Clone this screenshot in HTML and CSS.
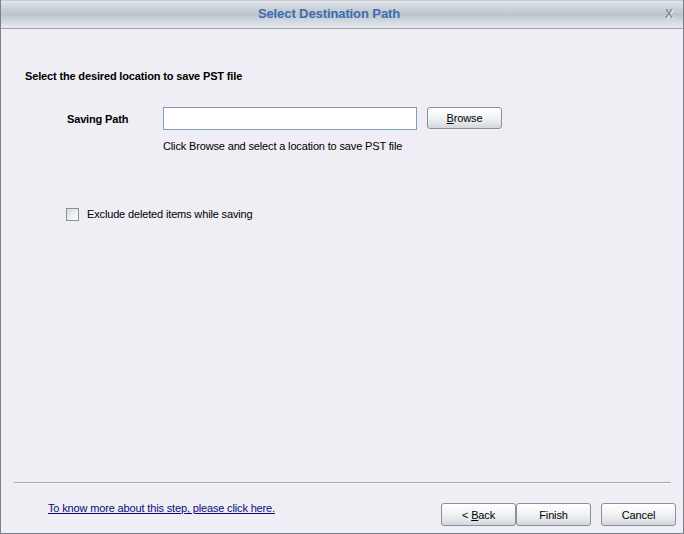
FILE: index.html
```html
<!DOCTYPE html>
<html>
<head>
<meta charset="utf-8">
<link rel="stylesheet" href="styles.css">
</head>
<body>
<div class="window">
  <div class="titlebar">
    <div class="title">Select Destination Path</div>
    <div class="close">X</div>
  </div>
  <div class="content">
    <div class="heading">Select the desired location to save PST file</div>
    <div class="path-row">
      <div class="label">Saving Path</div>
      <div class="path-col">
        <div class="path-inputs">
          <div class="input"></div>
          <div class="btn browse"><span><u>B</u>rowse</span></div>
        </div>
        <div class="hint">Click Browse and select a location to save PST file</div>
      </div>
    </div>
    <div class="check-row">
      <div class="checkbox"></div>
      <div class="check-label">Exclude deleted items while saving</div>
    </div>
  </div>
  <div class="footer">
    <div class="sep"></div>
    <div class="footer-row">
      <a class="link">To know more about this step, please click here.</a>
      <div class="buttons">
        <div class="btn"><span>&lt; <u>B</u>ack</span></div>
        <div class="btn">Finish</div>
        <div class="btn cancel">Cancel</div>
      </div>
    </div>
  </div>
</div>
</body>
</html>
```

FILE: styles.css
```css
* { box-sizing: border-box; }
html, body { margin: 0; padding: 0; }
body {
  width: 684px;
  height: 534px;
  font-family: "Liberation Sans", Arial, sans-serif;
  font-size: 11px;
  letter-spacing: -0.15px;
  color: #000;
  background: #eeeef4;
}
.window {
  width: 684px;
  height: 534px;
  display: flex;
  flex-direction: column;
  background: #eeeef4;
  border-left: 1px solid #7c8088;
  border-right: 1px solid #7c8088;
  border-bottom: 1px solid #7c8088;
}
.titlebar {
  height: 29px;
  flex: none;
  display: flex;
  align-items: center;
  padding: 0 8px 2px 0;
  border-top: 1px solid #c8ccd2;
  border-bottom: 1px solid #9ea3aa;
  background: linear-gradient(to bottom, #e4e7ec 0%, #ccd3da 25%, #bcc5ce 50%, #d6dce3 80%, #e8ebf0 100%);
}
.title {
  flex: 1;
  margin-right: 6px;
  text-align: center;
  font-weight: bold;
  font-size: 13px;
  letter-spacing: -0.1px;
  color: #3d6cae;
}
.close {
  width: 12px;
  text-align: center;
  font-weight: bold;
  font-size: 12px;
  color: #8c9097;
  text-shadow: 1px 1px 0 #f4f6f8;
}
.content {
  flex: 1;
  display: flex;
  flex-direction: column;
  padding: 40px 0 0 24px;
}
.heading {
  font-weight: bold;
  height: 14px;
  line-height: 14px;
}
.path-row {
  display: flex;
  margin-top: 23px;
}
.label {
  width: 138px;
  padding-left: 42px;
  padding-top: 2px;
  font-weight: bold;
  line-height: 23px;
}
.path-col {
  display: flex;
  flex-direction: column;
}
.path-inputs {
  display: flex;
  gap: 10px;
}
.input {
  width: 254px;
  height: 23px;
  margin-top: 1px;
  background: #fff;
  border: 1px solid #7f9db9;
}
.btn {
  width: 75px;
  height: 23px;
  border: 1px solid #8a9098;
  border-radius: 3px;
  display: flex;
  align-items: center;
  justify-content: center;
  font-size: 11px;
  background: linear-gradient(to bottom, #ffffff 0%, #f4f5f7 40%, #e3e6ea 75%, #d2d6dc 100%);
}
.browse {
  height: 22px;
  margin-top: 1px;
}
.hint {
  margin-top: 9px;
  line-height: 14px;
}
.check-row {
  display: flex;
  align-items: center;
  margin-top: 54px;
  padding-left: 41px;
}
.checkbox {
  width: 13px;
  height: 13px;
  border: 1px solid #8a9098;
  background: linear-gradient(135deg, #d8dbe0 0%, #eef0f3 60%, #ffffff 100%);
}
.check-label {
  margin-left: 8px;
  line-height: 14px;
}
.footer {
  flex: none;
  padding: 0 0 7px 13px;
}
.sep {
  width: 657px;
  height: 1px;
  background: #a4a8ae;
  border-bottom: 1px solid #fafafc;
  box-sizing: content-box;
}
.footer-row {
  display: flex;
  justify-content: space-between;
  align-items: flex-start;
  margin-top: 17px;
  padding-right: 7px;
}
.link {
  margin-left: 34px;
  margin-top: 0;
  color: #0a0a80;
  text-decoration: underline;
  line-height: 14px;
}
.buttons {
  display: flex;
  margin-top: 2px;
}
.cancel {
  margin-left: 10px;
}
```
